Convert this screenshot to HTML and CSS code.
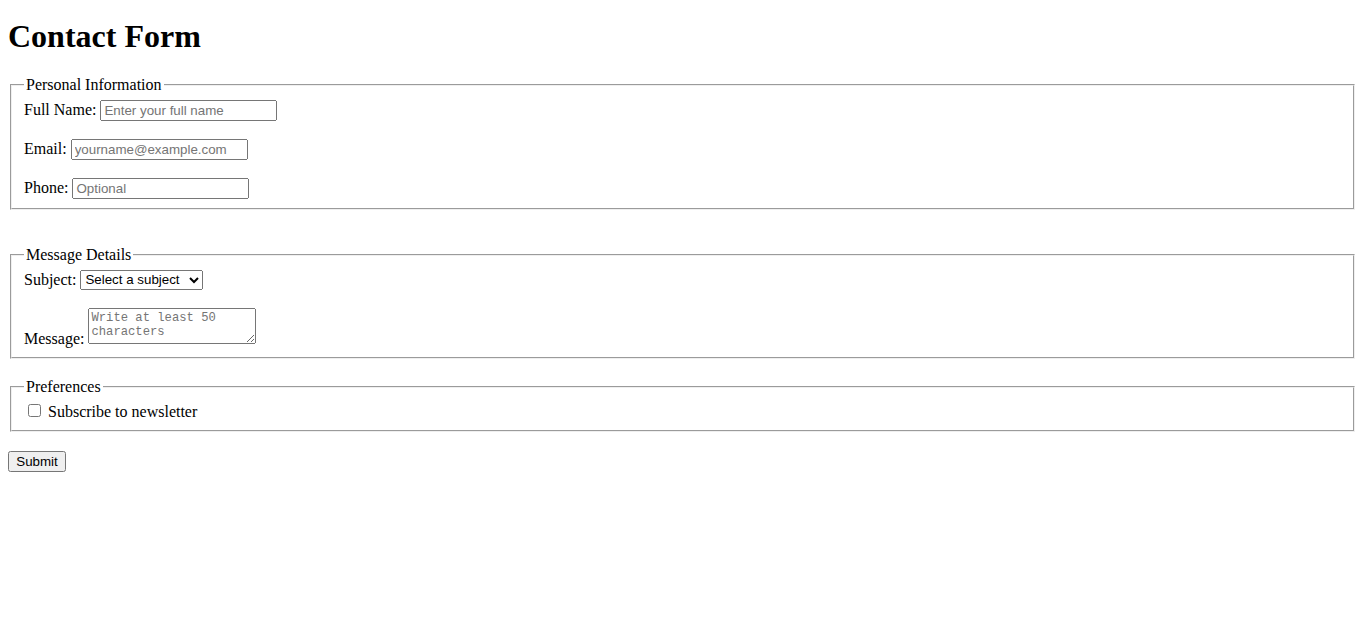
FILE: index.html
```html
<!DOCTYPE html>
<html lang="en">
<head>
  <meta charset="UTF-8">
  <title>Contact Form</title>
  <link rel="stylesheet" href="styles.css">
</head>
<body>
  <h1>Contact Form</h1>
  <form id="contact-form">
    <fieldset>
      <legend>Personal Information</legend>
      <label for="full-name">Full Name:</label>
      <input type="text" id="full-name" name="fullName" placeholder="Enter your full name"><br><br>
      <label for="email">Email:</label>
      <input type="email" id="email" name="email" placeholder="yourname@example.com"><br><br>
      <label for="phone">Phone:</label>
      <input type="tel" id="phone" name="phone" placeholder="Optional">
    </fieldset>
    <fieldset class="message-set">
      <legend>Message Details</legend>
      <label for="subject">Subject:</label>
      <select id="subject" name="subject">
        <option value="">Select a subject</option>
        <option value="general">General</option>
        <option value="support">Support</option>
      </select><br><br>
      <label for="message">Message:</label>
      <textarea id="message" name="message" placeholder="Write at least 50 characters"></textarea>
    </fieldset>
    <fieldset class="prefs-set">
      <legend>Preferences</legend>
      <label><input type="checkbox" name="newsletter"> Subscribe to newsletter</label>
    </fieldset>
    <button type="submit" class="submit-btn">Submit</button>
  </form>
</body>
</html>
```
FILE: styles.css
```css
body { font-family: "Liberation Serif", "Times New Roman", serif; font-size: 16px; color: #000; background: #fff; }
h1 { font-family: "Liberation Serif", "Times New Roman", serif; margin-top: 10px; }
input, select, button { font-family: "Liberation Sans", Arial, sans-serif; font-size: 13.333px; }
input[type="text"], input[type="email"], input[type="tel"] { box-sizing: border-box; width: 177px; height: 21px; }
select { box-sizing: border-box; width: 123px; height: 20px; }
textarea { font-family: "Liberation Mono", "Courier New", monospace; font-size: 12.2px; box-sizing: border-box; width: 168px; height: 36px; }
fieldset { padding-bottom: 9px; }
.message-set { margin-top: 36px; }
.prefs-set { margin-top: 19px; }
.submit-btn { margin-top: 19px; height: 21px; width: 58px; }
```
